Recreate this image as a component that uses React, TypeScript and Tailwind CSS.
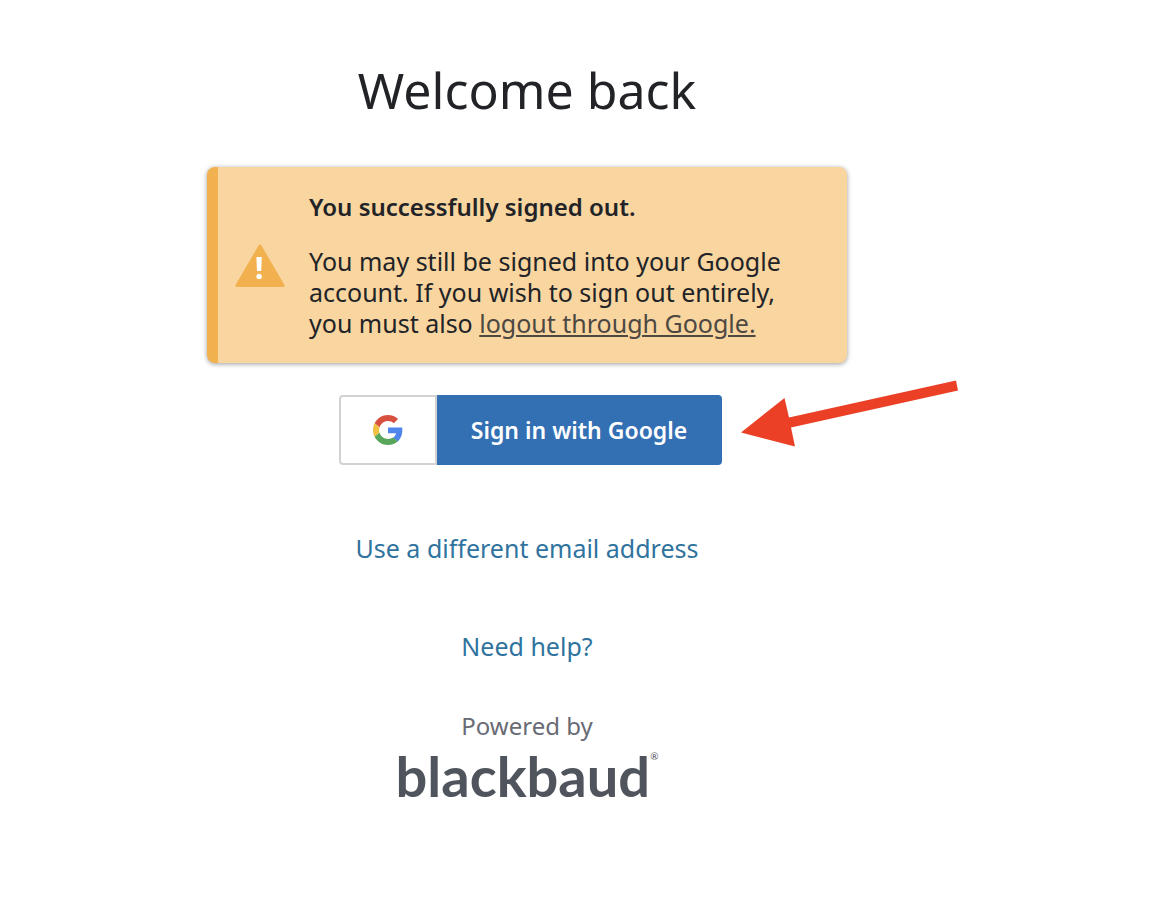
import type { ReactNode } from 'react';

function WarningIcon() {
  return (
    <svg width="50" height="44" viewBox="0 0 50 44" aria-hidden="true">
      <path d="M25 3 L48 42.5 H2 Z" fill="#f2b14f" stroke="#f2b14f" strokeWidth="3" strokeLinejoin="round" />
      <path d="M21.4 14 H26.8 L26.2 28 H22 Z" fill="#fff" />
      <circle cx="24.1" cy="33.4" r="2.7" fill="#fff" />
    </svg>
  );
}

function GoogleIcon() {
  return (
    <svg width="30" height="30" viewBox="0 0 48 48" aria-hidden="true">
      <path fill="#d85140" d="M24 9.5c3.54 0 6.71 1.22 9.21 3.6l6.85-6.85C35.9 2.38 30.47 0 24 0 14.62 0 6.51 5.38 2.56 13.22l7.98 6.19C12.43 13.72 17.74 9.5 24 9.5z" />
      <path fill="#5086ec" d="M46.98 24.55c0-1.57-.15-3.09-.38-4.55H24v9.02h12.94c-.58 2.96-2.26 5.48-4.78 7.18l7.73 6c4.51-4.18 7.09-10.36 7.09-17.65z" />
      <path fill="#f1be42" d="M10.53 28.59c-.48-1.45-.76-2.99-.76-4.59s.27-3.14.76-4.59l-7.98-6.19C.92 16.46 0 20.12 0 24c0 3.88.92 7.54 2.56 10.78l7.97-6.19z" />
      <path fill="#58a55c" d="M24 48c6.48 0 11.93-2.13 15.89-5.81l-7.73-6c-2.15 1.45-4.92 2.3-8.16 2.3-6.26 0-11.57-4.22-13.47-9.91l-7.98 6.19C6.51 42.62 14.62 48 24 48z" />
    </svg>
  );
}

function Arrow() {
  return (
    <svg
      className="pointer-events-none absolute -top-4 left-full ml-4"
      width="222"
      height="70"
      viewBox="0 0 222 70"
      aria-hidden="true"
    >
      <path d="M3 53.5 L46.5 19 L51 38.5 L218 1.5 L220 11.5 L53 48.5 L57 67.5 Z" fill="#eb4026" />
    </svg>
  );
}

function TextLink({ children }: { children: ReactNode }) {
  return (
    <a href="#" className="text-[25px] leading-8 text-[#2f739e] hover:underline">
      {children}
    </a>
  );
}

export default function App() {
  return (
    <main className="min-h-screen bg-white pt-[54px] pr-[118px] pb-14 font-['Noto_Sans',sans-serif] text-[#212327]">
      <div className="mx-auto flex w-full max-w-160 flex-col items-center">
        <h1 className="text-[50px] leading-18 font-normal">Welcome back</h1>

        <section className="mt-[41px] flex w-full items-center rounded-lg border-l-11 border-[#f2b14f] bg-[#f9d5a0] py-6 shadow-[0_1px_5px_rgba(0,0,0,0.4)]">
          <div className="ml-[17px] shrink-0">
            <WarningIcon />
          </div>
          <div className="ml-6 pr-14 text-[25px] leading-[31px]">
            <p className="text-2xl leading-[31px] font-semibold">You successfully signed out.</p>
            <p className="mt-6">
              You may still be signed into your Google account. If you wish to sign out entirely, you must also{' '}
              <a href="#" className="text-[#4d4842] underline decoration-2 underline-offset-2">
                logout through Google.
              </a>
            </p>
          </div>
        </section>

        <div className="relative mt-8 pl-1.5">
          <button type="button" className="flex h-[70px] cursor-pointer items-stretch">
            <span className="flex w-[98px] items-center justify-center rounded-l-sm border-2 border-[#d2d2d2] bg-white">
              <GoogleIcon />
            </span>
            <span className="flex w-[285px] items-center justify-center rounded-r-sm bg-[#336fb3] text-[23px] font-semibold text-white">
              Sign in with Google
            </span>
          </button>
          <Arrow />
        </div>

        <div className="mt-[67px] flex flex-col items-center gap-[66px]">
          <TextLink>Use a different email address</TextLink>
          <TextLink>Need help?</TextLink>
        </div>

        <footer className="mt-12 flex flex-col items-center text-[#686b73]">
          <p className="text-2xl leading-8">Powered by</p>
          <p className="flex items-start font-['Lato',sans-serif] text-[56px] leading-17 font-bold text-[#50545c]">
            blackbaud
            <sup className="top-0 mt-2 text-[10px] leading-3 font-normal">®</sup>
          </p>
        </footer>
      </div>
    </main>
  );
}
